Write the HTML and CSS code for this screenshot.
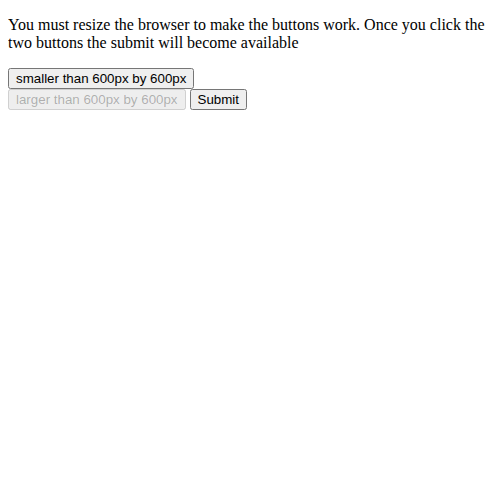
FILE: index.html
```html
<!DOCTYPE html>
<html>
<head>
<meta charset="utf-8">
<link rel="stylesheet" href="styles.css">
</head>
<body class="page">
<p class="intro">You must resize the browser to make the buttons work. Once you click the two buttons the submit will become available</p>
<button class="btn">smaller than 600px by 600px</button><br>
<button class="btn" disabled>larger than 600px by 600px</button>
<button class="btn">Submit</button>
</body>
</html>
```
FILE: styles.css
```css
.page {
  margin: 16px 8px 8px;
  font-family: "Liberation Serif", serif;
  font-size: 16px;
}
.intro {
  margin: 0 0 16px;
}
.btn {
  font-family: "Liberation Sans", Arial, sans-serif;
  font-size: 13.333px;
}
```
